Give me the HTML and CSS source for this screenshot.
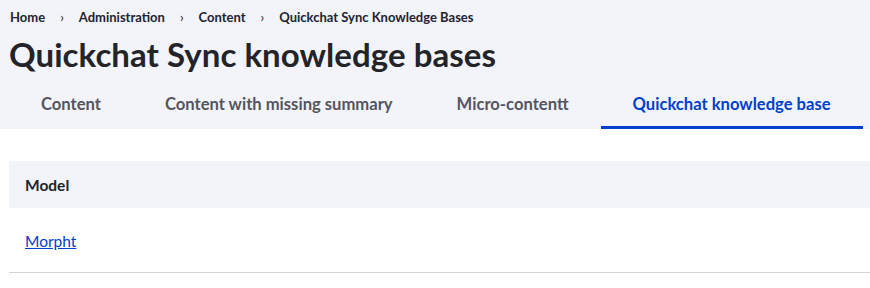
FILE: index.html
```html
<!DOCTYPE html>
<html lang="en">
<head>
<meta charset="utf-8">
<title>Quickchat Sync knowledge bases</title>
<link rel="stylesheet" href="styles.css">
</head>
<body>
<header class="page-header">
  <nav class="breadcrumb">
    <a href="#">Home</a><span class="sep">›</span>
    <a href="#">Administration</a><span class="sep">›</span>
    <a href="#">Content</a><span class="sep">›</span>
    <span>Quickchat Sync Knowledge Bases</span>
  </nav>
  <h1 class="title">Quickchat Sync knowledge bases</h1>
  <ul class="tabs">
    <li><a class="tab" href="#">Content</a></li>
    <li><a class="tab" href="#">Content with missing summary</a></li>
    <li><a class="tab" href="#">Micro-contentt</a></li>
    <li><a class="tab active" href="#">Quickchat knowledge base</a></li>
  </ul>
</header>
<main class="content">
  <table class="data">
    <thead><tr><th>Model</th></tr></thead>
    <tbody><tr><td><a href="#">Morpht</a></td></tr></tbody>
  </table>
</main>
</body>
</html>
```
FILE: styles.css
```css
html, body {
  margin: 0;
  padding: 0;
  background: #ffffff;
  font-family: Lato, "Noto Sans", sans-serif;
  color: #232429;
}
.page-header {
  background: #f3f4f9;
  padding: 0 0 0 9px;
}
.breadcrumb {
  display: flex;
  align-items: center;
  height: 34px;
  padding-left: 1px;
  font-size: 13px;
  font-weight: 700;
  color: #222330;
}
.breadcrumb a { color: #222330; text-decoration: none; }
.breadcrumb .sep {
  padding: 0 15px;
  font-weight: 400;
  font-size: 13px;
}
.title {
  margin: 0;
  font-size: 33px;
  line-height: 40px;
  font-weight: 700;
  letter-spacing: 0.05px;
  height: 40px;
}
.tabs {
  list-style: none;
  margin: 0;
  padding: 7px 0 0;
  display: flex;
}
.tab {
  display: block;
  padding: 2px 32px 0;
  height: 48px;
  line-height: 43px;
  box-sizing: border-box;
  font-size: 16.6px;
  font-weight: 700;
  color: #545560;
  text-decoration: none;
  border-bottom: 3px solid transparent;
}
.tab.active {
  color: #003ecc;
  border-bottom-color: #003ecc;
}
.content {
  padding: 32px 0 0 9px;
}
.data {
  width: 100%;
  border-collapse: collapse;
  font-size: 15.5px;
}
.data th {
  background: #f3f4f9;
  text-align: left;
  height: 47px;
  padding: 0 16px;
  font-weight: 700;
  color: #232429;
}
.data td {
  height: 63px;
  padding: 1px 16px 0;
  border-bottom: 1px solid #d3d4d9;
}
.data a { color: #003ecc; }
```
